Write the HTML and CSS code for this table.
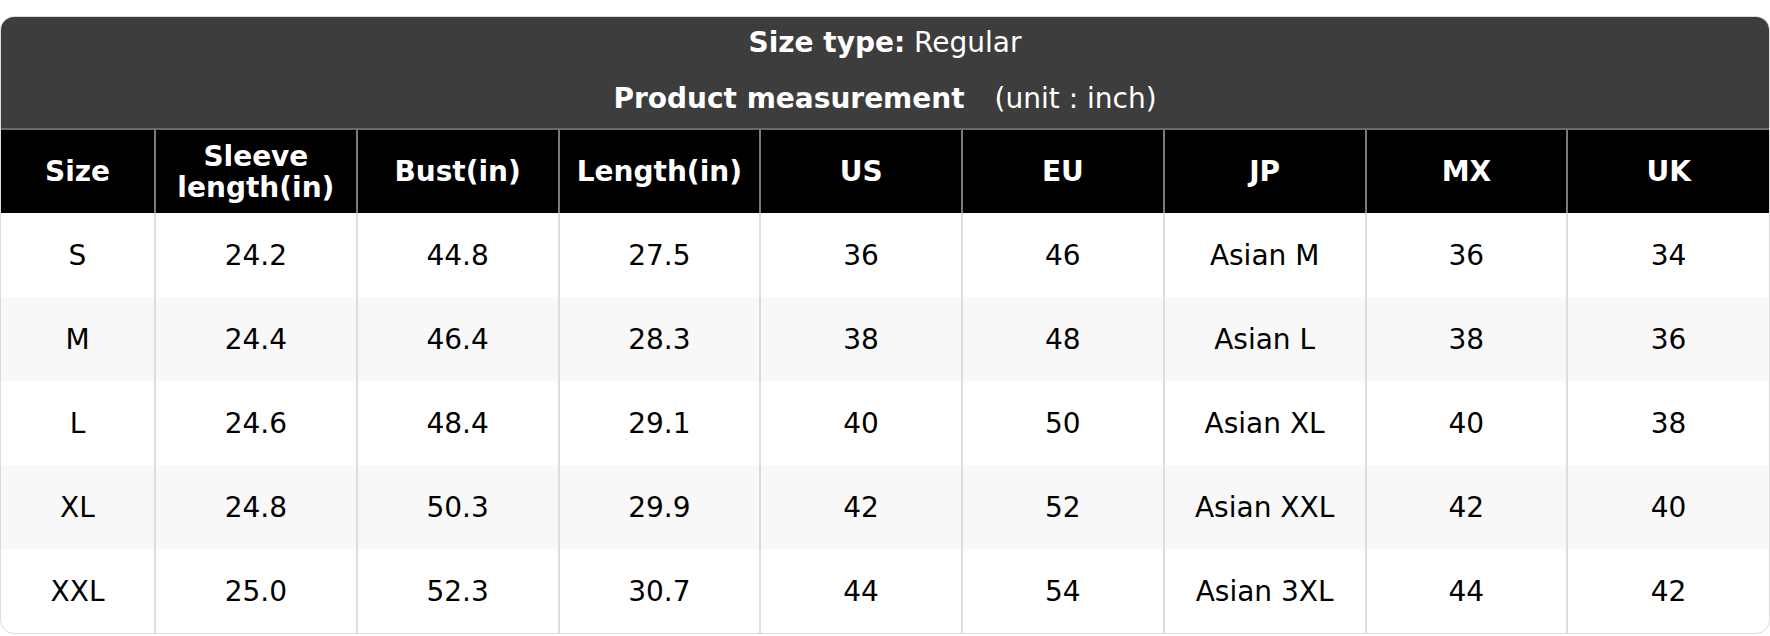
FILE: index.html
```html
<!DOCTYPE html>
<html lang="en">
<head>
<meta charset="utf-8">
<title>Size chart</title>
<link rel="stylesheet" href="styles.css">
</head>
<body>
<div class="card">
  <div class="caption">
    <p class="line"><b>Size type:</b> Regular</p>
    <p class="line"><b>Product measurement</b><span class="unit">(unit : inch)</span></p>
  </div>
  <table class="chart">
    <colgroup><col class="c-first"><col><col><col><col><col><col><col><col></colgroup>
    <thead>
      <tr><th>Size</th><th>Sleeve<br>length(in)</th><th>Bust(in)</th><th>Length(in)</th><th>US</th><th>EU</th><th>JP</th><th>MX</th><th>UK</th></tr>
    </thead>
    <tbody>
      <tr><td>S</td><td>24.2</td><td>44.8</td><td>27.5</td><td>36</td><td>46</td><td>Asian M</td><td>36</td><td>34</td></tr>
      <tr><td>M</td><td>24.4</td><td>46.4</td><td>28.3</td><td>38</td><td>48</td><td>Asian L</td><td>38</td><td>36</td></tr>
      <tr><td>L</td><td>24.6</td><td>48.4</td><td>29.1</td><td>40</td><td>50</td><td>Asian XL</td><td>40</td><td>38</td></tr>
      <tr><td>XL</td><td>24.8</td><td>50.3</td><td>29.9</td><td>42</td><td>52</td><td>Asian XXL</td><td>42</td><td>40</td></tr>
      <tr><td>XXL</td><td>25.0</td><td>52.3</td><td>30.7</td><td>44</td><td>54</td><td>Asian 3XL</td><td>44</td><td>42</td></tr>
    </tbody>
  </table>
</div>
</body>
</html>
```
FILE: styles.css
```css
html, body {
  margin: 0;
  padding: 0;
  background: #ffffff;
}
body {
  padding-top: 16px;
  font-family: "DejaVu Sans", Verdana, sans-serif;
  font-size: 28px;
  color: #000;
}
.card {
  border: 1px solid #dcdcdc;
  border-radius: 14px;
  overflow: hidden;
  background: #fff;
}
.caption {
  background: #3d3d3d;
  color: #fff;
  text-align: center;
  padding: 10px 0 13px;
}
.line {
  margin: 0;
  line-height: 32px;
}
.line + .line {
  margin-top: 24px;
}
.unit {
  margin-left: 30px;
}
.chart {
  width: 100%;
  border-collapse: collapse;
  table-layout: fixed;
}
.c-first {
  width: 154px;
}
.chart th {
  background: #000;
  color: #fff;
  font-weight: bold;
  height: 83px;
  padding: 0;
  line-height: 31px;
  border-left: 2px solid #7a7a7a;
  border-top: 2px solid #6a6a6a;
  text-align: center;
  vertical-align: middle;
}
.chart td {
  height: 84px;
  padding: 0;
  text-align: center;
  vertical-align: middle;
  border-left: 2px solid #dddddd;
}
.chart th:first-child,
.chart td:first-child {
  border-left: none;
}
.chart tbody tr:nth-child(even) td {
  background: #f8f8f8;
}
```
